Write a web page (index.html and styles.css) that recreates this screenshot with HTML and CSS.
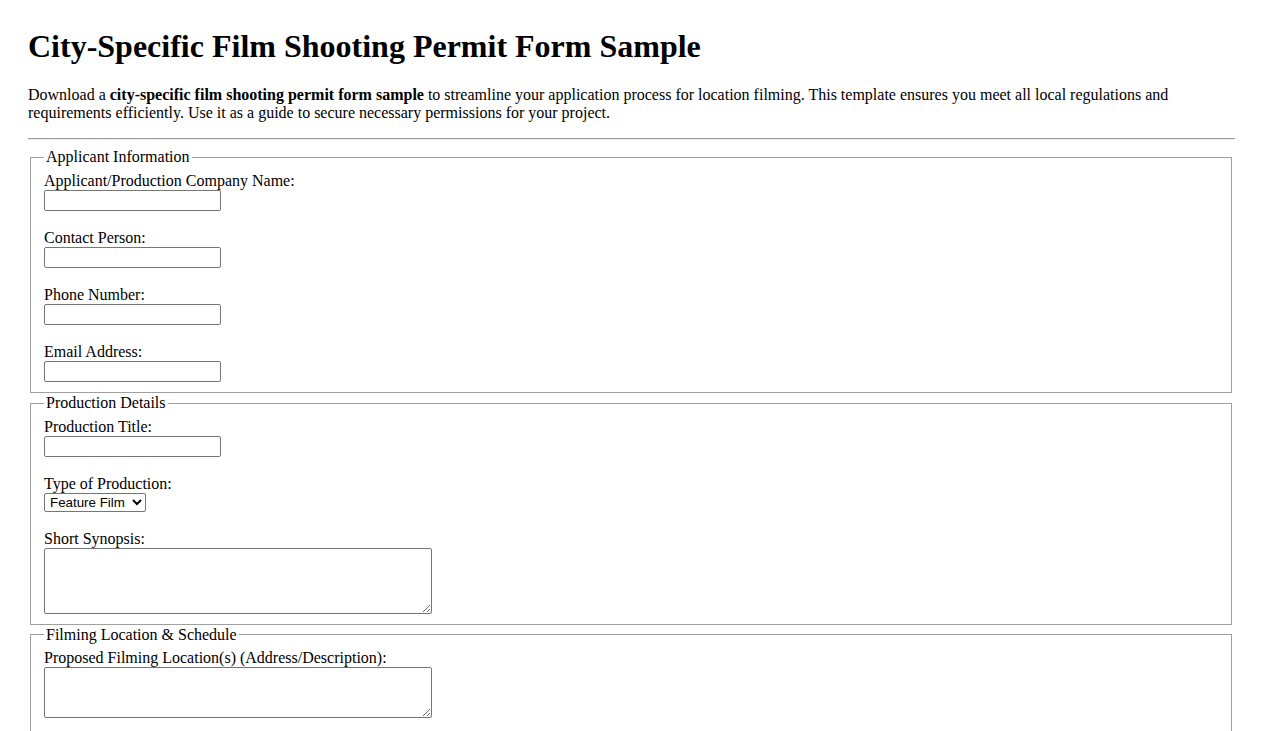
FILE: index.html
```html
<!DOCTYPE html>
<html lang="en">
<head>
<meta charset="utf-8">
<title>City-Specific Film Shooting Permit Form Sample</title>
<link rel="stylesheet" href="styles.css">
</head>
<body>
<h1 class="title">City-Specific Film Shooting Permit Form Sample</h1>
<p class="intro">Download a <strong>city-specific film shooting permit form sample</strong> to streamline your application process for location filming. This template ensures you meet all local regulations and requirements efficiently. Use it as a guide to secure necessary permissions for your project.</p>
<hr class="rule">
<form class="permit">
  <fieldset class="section">
    <legend class="section-title">Applicant Information</legend>
    <div class="field">
      <label class="label" for="company">Applicant/Production Company Name:</label>
      <input class="text" type="text" id="company">
    </div>
    <div class="field">
      <label class="label" for="contact">Contact Person:</label>
      <input class="text" type="text" id="contact">
    </div>
    <div class="field">
      <label class="label" for="phone">Phone Number:</label>
      <input class="text" type="tel" id="phone">
    </div>
    <div class="field">
      <label class="label" for="email">Email Address:</label>
      <input class="text" type="email" id="email">
    </div>
  </fieldset>
  <fieldset class="section">
    <legend class="section-title">Production Details</legend>
    <div class="field">
      <label class="label" for="title">Production Title:</label>
      <input class="text" type="text" id="title">
    </div>
    <div class="field">
      <label class="label" for="type">Type of Production:</label>
      <select class="select" id="type">
        <option>Feature Film</option>
        <option>Short Film</option>
        <option>Commercial</option>
        <option>Documentary</option>
      </select>
    </div>
    <div class="field">
      <label class="label" for="synopsis">Short Synopsis:</label>
      <textarea class="area area-4" id="synopsis"></textarea>
    </div>
  </fieldset>
  <fieldset class="section">
    <legend class="section-title">Filming Location &amp; Schedule</legend>
    <div class="field">
      <label class="label" for="location">Proposed Filming Location(s) (Address/Description):</label>
      <textarea class="area area-3" id="location"></textarea>
    </div>
    <div class="field">
      <label class="label" for="start">Start Date:</label>
      <input class="text" type="text" id="start">
    </div>
  </fieldset>
</form>
</body>
</html>
```
FILE: styles.css
```css
html, body {
  background: #fff;
}
body {
  margin: 28px;
  font-family: "Liberation Serif", "Times New Roman", serif;
  font-size: 16px;
  line-height: normal;
  color: #000;
}
.title {
  font-size: 32px;
  font-weight: bold;
  margin: 0 0 21.44px;
}
.intro {
  margin: 16px 0;
}
.rule {
  margin: 8px 0;
  height: 0;
  border: 0;
  border-top: 1px solid #9a9a9a;
  border-bottom: 1px solid #eeeeee;
}
.permit {
  margin: 0;
}
.section {
  margin: 0 3px 1px 2px;
  padding: 5.6px 13px 10px;
  border: 1px solid #a0a0a0;
  min-width: 0;
}
.section-title {
  padding: 0 2px;
}
.field {
  margin-bottom: 18px;
}
.field:last-child {
  margin-bottom: 0;
}
.label {
  display: block;
}
.text {
  display: block;
  box-sizing: border-box;
  width: 177px;
  height: 21px;
  margin: 0;
  padding: 1px 2px;
  border: 1px solid #767676;
  border-radius: 2px;
  font-family: "Liberation Sans", Arial, sans-serif;
  font-size: 13.33px;
  background: #fff;
}
.select {
  display: block;
  box-sizing: border-box;
  height: 19px;
  margin: 0;
  width: 102px;
  padding: 0 0 0 1px;
  font-family: "Liberation Sans", Arial, sans-serif;
  font-size: 13.33px;
  border: 1px solid #767676;
  border-radius: 2px;
  background: #fff;
  color: #000;
}
.area {
  display: block;
  box-sizing: border-box;
  width: 388px;
  margin: 0;
  padding: 2px;
  border: 1px solid #767676;
  border-radius: 2px;
  font-family: "Liberation Mono", monospace;
  font-size: 13.33px;
  background: #fff;
}
.area-4 {
  height: 66px;
}
.area-3 {
  height: 51px;
}
```
